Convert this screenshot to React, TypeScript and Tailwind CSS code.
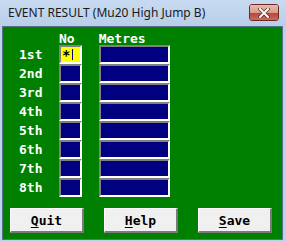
import React from "react";

const mono = { fontFamily: '"DejaVu Sans Mono", "Liberation Mono", monospace' };

const places = ["1st", "2nd", "3rd", "4th", "5th", "6th", "7th", "8th"];

function Cell({ w, yellow, children }: { w: string; yellow?: boolean; children?: React.ReactNode }) {
  return (
    <div
      className={`${w} h-[19px] border-t-2 border-l-2 border-b-2 border-r-2 border-t-[#808080] border-l-[#808080] border-b-white border-r-white ${
        yellow ? "bg-[#ffff00]" : "bg-[#000080]"
      } flex items-center`}
    >
      {children}
    </div>
  );
}

function Btn({ first, rest }: { first: string; rest: string }) {
  return (
    <div
      className="w-[74px] h-[25px] bg-[#f0f0f0] border-t border-l border-t-white border-l-white border-b-2 border-r-2 border-b-[#7a7a7a] border-r-[#7a7a7a] flex items-center justify-center text-[13px] font-bold text-black leading-none"
      style={mono}
    >
      <span className="underline underline-offset-2">{first}</span>
      <span>{rest}</span>
    </div>
  );
}

export default function App() {
  return (
    <div className="w-[286px] h-[242px] bg-[#bcd3ee] flex flex-col overflow-hidden">
      {/* title bar */}
      <div className="h-[26px] flex items-center pl-[8px] pr-[7px] bg-gradient-to-b from-[#c7daf1] to-[#b8cfea]">
        <span
          className="text-[12px] text-[#1a1a1a] leading-none flex-1 pb-[1px]"
          style={{ fontFamily: '"Noto Sans", "Liberation Sans", sans-serif' }}
        >
          EVENT RESULT (Mu20 High Jump B)
        </span>
        <div className="w-[30px] h-[17px] rounded-[3px] border border-[#6e2a22] overflow-hidden flex flex-col relative mb-[1px]">
          <div className="h-1/2 bg-gradient-to-b from-[#e9b8ad] to-[#d99a8c]" />
          <div className="h-1/2 bg-gradient-to-b from-[#b8463a] to-[#c76a5c]" />
          <svg className="absolute inset-0 m-auto" width="12" height="10" viewBox="0 0 12 10">
            <path d="M2 1 L10 9 M10 1 L2 9" stroke="#5a2a24" strokeWidth="3.4" strokeLinecap="square" />
            <path d="M2 1 L10 9 M10 1 L2 9" stroke="#ffffff" strokeWidth="2" strokeLinecap="square" />
          </svg>
        </div>
      </div>
      {/* client */}
      <div className="flex-1 ml-[2px] mr-[3px] mb-[2px] border-l border-t border-r border-b border-l-[#5a6f8a] border-t-[#5a6f8a] border-r-[#5a6f8a] border-b-[#5a6f8a] bg-[#008000] flex flex-col">
        <div className="h-[18px] flex text-white font-bold text-[13px] leading-none pt-[5px]" style={mono}>
          <span className="ml-[56px]">No</span>
          <span className="ml-[24px]">Metres</span>
        </div>
        {places.map((p, i) => (
          <div key={p} className="flex items-center h-[19px]">
            <span className="w-[56px] pl-[16px] text-white font-bold text-[13px] leading-none" style={mono}>
              {p}
            </span>
            <Cell w="w-[23px]" yellow={i === 0}>
              {i === 0 && (
                <div className="flex items-center h-full">
                  <span className="ml-[1px] text-black font-bold text-[14px] leading-none" style={mono}>
                    *
                  </span>
                  <div className="w-[1px] h-[11px] bg-[#000080] ml-[2px]" />
                </div>
              )}
            </Cell>
            <div className="w-[17px]" />
            <Cell w="w-[71px]" />
          </div>
        ))}
        <div className="flex mt-[11px] pl-[7px] gap-[20px]">
          <Btn first="Q" rest="uit" />
          <Btn first="H" rest="elp" />
          <Btn first="S" rest="ave" />
        </div>
      </div>
    </div>
  );
}
